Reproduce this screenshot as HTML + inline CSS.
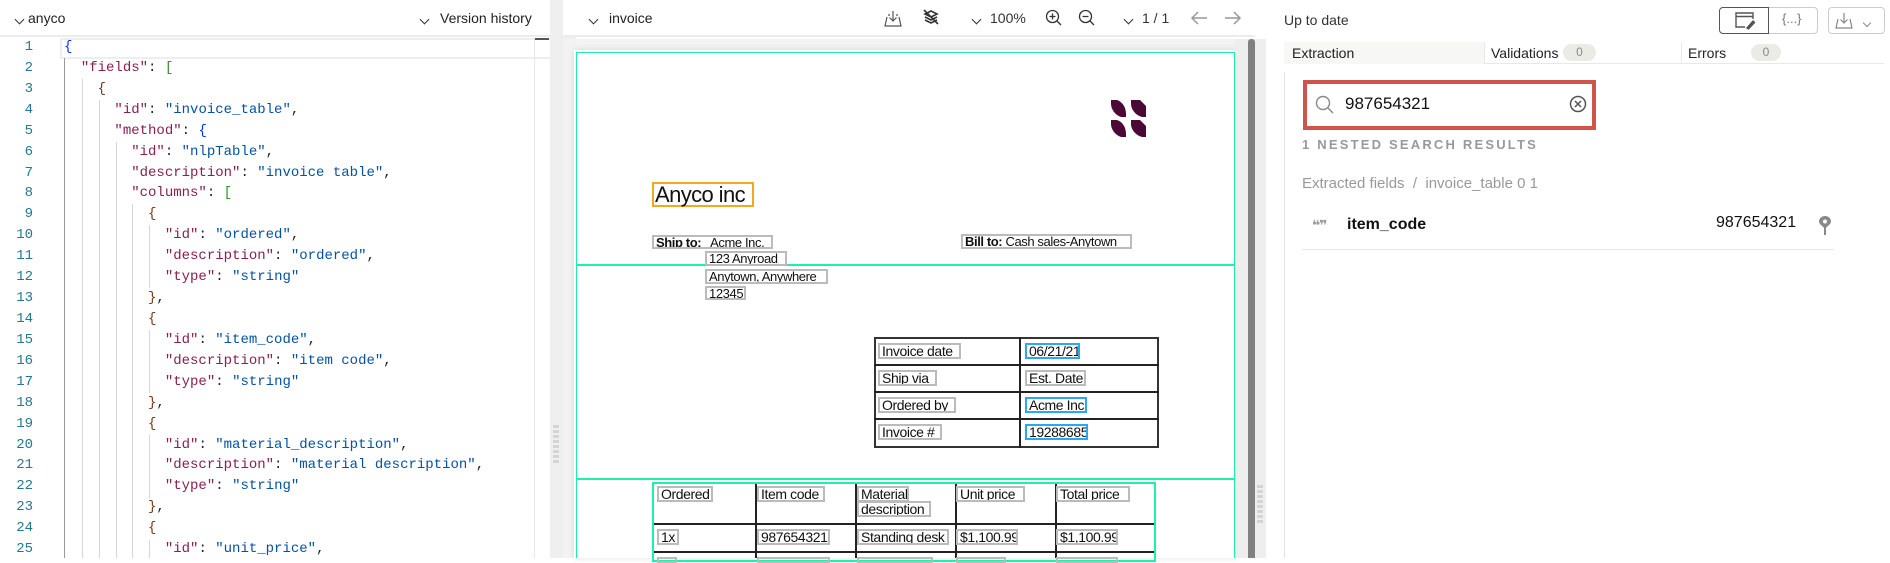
<!DOCTYPE html>
<html><head><meta charset="utf-8"><style>
*{box-sizing:border-box;margin:0;padding:0}
body{width:1890px;height:558px;overflow:hidden;background:#fff;font-family:"Liberation Sans",sans-serif;position:relative;color:#222}
.a{position:absolute}
.code{font-family:"Liberation Mono",monospace;font-size:14px;white-space:pre;line-height:20.92px}
.ln{position:absolute;left:0;width:33px;text-align:right;color:#237893;font-family:"Liberation Mono",monospace;font-size:14px;line-height:20.92px}
.k{color:#8a1f4e}.s{color:#0451a5}.b1{color:#0431fa}.b2{color:#319331}.b3{color:#7b3814}
.g{position:absolute;width:1px;background:#d6d6d6}
.doc{font-family:"Liberation Sans",sans-serif;font-size:13px;color:#111;letter-spacing:-0.4px}
.w{position:absolute;border:2px solid #bbb;line-height:11px;padding:0 2px;white-space:nowrap;overflow:hidden}
.wb{border-color:#2aa8f0}
.gl{position:absolute;background:#1ef0a8}
.hline{position:absolute;background:#222}
.chev{display:inline-block;width:7px;height:7px;border-right:1.6px solid #333;border-bottom:1.6px solid #333;transform:rotate(45deg)}
</style></head><body>

<!-- LEFT PANEL -->
<div class="a" style="left:0;top:0;width:550px;height:37px;border-bottom:2px solid #ececec"></div>
<div class="a" style="left:16px;top:10px"><span class="chev"></span></div>
<div class="a" style="left:28px;top:10px;font-size:14px;color:#222">anyco</div>
<div class="a" style="left:421px;top:10px"><span class="chev"></span></div>
<div class="a" style="left:440px;top:10px;font-size:14px;color:#222">Version history</div>
<div class="a" style="left:60px;top:38px;width:490px;height:21px;border:2px solid #eee;border-right:none"></div>
<div class="a" style="left:534px;top:38px;width:15px;height:2px;background:#555"></div>
<div class="a" style="left:534px;top:38px;width:1px;height:520px;background:#e6e6e6"></div>

<div class="ln" style="top:37px">1<br>2<br>3<br>4<br>5<br>6<br>7<br>8<br>9<br>10<br>11<br>12<br>13<br>14<br>15<br>16<br>17<br>18<br>19<br>20<br>21<br>22<br>23<br>24<br>25</div>
<div class="g" style="left:64px;top:58px;height:500px;background:#999"></div>
<div class="g" style="left:82px;top:79px;height:479px"></div>
<div class="g" style="left:99px;top:100px;height:458px"></div>
<div class="g" style="left:116px;top:142px;height:416px"></div>
<div class="g" style="left:132px;top:204px;height:354px"></div>
<div class="g" style="left:149px;top:225px;height:63px"></div>
<div class="g" style="left:149px;top:330px;height:63px"></div>
<div class="g" style="left:149px;top:435px;height:63px"></div>
<div class="g" style="left:149px;top:540px;height:18px"></div>
<div class="a code" style="left:64px;top:37px"><span class="b1">{</span>
  <span class="k">"fields"</span>: <span class="b2">[</span>
    <span class="b3">{</span>
      <span class="k">"id"</span>: <span class="s">"invoice_table"</span>,
      <span class="k">"method"</span>: <span class="b1">{</span>
        <span class="k">"id"</span>: <span class="s">"nlpTable"</span>,
        <span class="k">"description"</span>: <span class="s">"invoice table"</span>,
        <span class="k">"columns"</span>: <span class="b2">[</span>
          <span class="b3">{</span>
            <span class="k">"id"</span>: <span class="s">"ordered"</span>,
            <span class="k">"description"</span>: <span class="s">"ordered"</span>,
            <span class="k">"type"</span>: <span class="s">"string"</span>
          <span class="b3">}</span>,
          <span class="b3">{</span>
            <span class="k">"id"</span>: <span class="s">"item_code"</span>,
            <span class="k">"description"</span>: <span class="s">"item code"</span>,
            <span class="k">"type"</span>: <span class="s">"string"</span>
          <span class="b3">}</span>,
          <span class="b3">{</span>
            <span class="k">"id"</span>: <span class="s">"material_description"</span>,
            <span class="k">"description"</span>: <span class="s">"material description"</span>,
            <span class="k">"type"</span>: <span class="s">"string"</span>
          <span class="b3">}</span>,
          <span class="b3">{</span>
            <span class="k">"id"</span>: <span class="s">"unit_price"</span>,</div>

<!-- separator 1 -->
<div class="a" style="left:550px;top:0;width:26px;height:558px;background:#efefef"></div>
<div class="a" style="left:553px;top:425px;width:6px;height:38px;background:repeating-linear-gradient(#d4d4d4 0 3px,transparent 3px 5px)"></div>

<!-- MIDDLE PANEL -->
<div class="a" style="left:563px;top:0;width:692px;height:37px;background:#fff;border-bottom:2px solid #ececec"></div>
<div class="a" style="left:590px;top:10px"><span class="chev"></span></div>
<div class="a" style="left:609px;top:10px;font-size:14px;color:#222">invoice</div>
<svg class="a" style="left:884px;top:10px" width="18" height="17" viewBox="0 0 18 17" fill="none" stroke="#555" stroke-width="1.2"><path d="M3 7 L1 16 H17 L15 7 M9 1 V11 M5.5 7.5 L9 11 L12.5 7.5 M6 5 H4 M12 5 H14"/></svg>
<svg class="a" style="left:922px;top:8px" width="18" height="18" viewBox="0 0 18 18" fill="none" stroke="#333" stroke-width="1.6"><path d="M3 6 L9 3 L15 6 L9 9 Z M3 9 L9 12 L15 9 M3 12 L9 15 L15 12 M2 2 L16 16"/></svg>
<div class="a" style="left:973px;top:10px"><span class="chev"></span></div>
<div class="a" style="left:990px;top:10px;font-size:14px;color:#333">100%</div>
<svg class="a" style="left:1045px;top:9px" width="18" height="18" viewBox="0 0 18 18" fill="none" stroke="#333" stroke-width="1.3"><circle cx="7.5" cy="7.5" r="6"/><path d="M7.5 4.5 V10.5 M4.5 7.5 H10.5 M12 12 L16 16"/></svg>
<svg class="a" style="left:1078px;top:9px" width="18" height="18" viewBox="0 0 18 18" fill="none" stroke="#333" stroke-width="1.3"><circle cx="7.5" cy="7.5" r="6"/><path d="M4.5 7.5 H10.5 M12 12 L16 16"/></svg>
<div class="a" style="left:1125px;top:10px"><span class="chev"></span></div>
<div class="a" style="left:1142px;top:10px;font-size:14px;color:#333">1 / 1</div>
<svg class="a" style="left:1190px;top:10px" width="18" height="16" viewBox="0 0 18 16" fill="none" stroke="#999" stroke-width="1.5"><path d="M17 8 H2 M8 2 L2 8 L8 14"/></svg>
<svg class="a" style="left:1224px;top:10px" width="18" height="16" viewBox="0 0 18 16" fill="none" stroke="#999" stroke-width="1.5"><path d="M1 8 H16 M10 2 L16 8 L10 14"/></svg>

<div class="a" style="left:563px;top:39px;width:685px;height:519px;background:#f3f3f3"></div>
<div class="a" style="left:574px;top:50px;width:664px;height:508px;background:#fff;box-shadow:0 0 6px rgba(0,0,0,.12)"></div>
<div class="a" style="left:1235px;top:39px;width:31px;height:519px;background:#eeeeee"></div>
<div class="a" style="left:1248px;top:39px;width:7px;height:519px;background:#808080;border-radius:3px 3px 0 0"></div>
<div class="a" style="left:1257px;top:485px;width:6px;height:38px;background:repeating-linear-gradient(#d4d4d4 0 3px,transparent 3px 5px)"></div>

<div class="gl" style="left:576px;top:52px;width:659px;height:1px"></div>
<div class="gl" style="left:576px;top:52px;width:1px;height:506px"></div>
<div class="gl" style="left:1234px;top:52px;width:1px;height:506px"></div>
<div class="gl" style="left:576px;top:264px;width:659px;height:2px"></div>
<div class="gl" style="left:576px;top:478px;width:659px;height:2px"></div>

<svg class="a" style="left:1109px;top:100px" width="39" height="37" viewBox="0 0 39 37" fill="#4b0a36"><path d="M2 0 H8 C14 2 17 8 17 14 V17 H12 C6 15 2 9 2 4 Z"/><path d="M22 0 H31 L37 6 V17 H33 C26 15 22 9 22 4 Z"/><path d="M2 20 H8 C14 22 17 28 17 34 V37 H12 C6 35 2 29 2 24 Z"/><path d="M22 20 H31 L37 26 V37 H33 C26 35 22 29 22 24 Z"/></svg>

<div class="doc">
<div class="a" style="left:652px;top:182px;width:102px;height:25px;border:2px solid #f5a623;font-size:22px;line-height:22px;padding-left:1px;letter-spacing:-0.6px">Anyco inc</div>
<div class="w" style="left:652px;top:235px;width:121px;height:14px"><b>Ship to:</b>&nbsp;&nbsp; Acme Inc.</div>
<div class="w" style="left:705px;top:251px;width:82px;height:15px">123 Anyroad</div>
<div class="w" style="left:705px;top:269px;width:123px;height:15px">Anytown, Anywhere</div>
<div class="w" style="left:705px;top:286px;width:41px;height:14px">12345</div>
<div class="w" style="left:961px;top:234px;width:171px;height:15px"><b>Bill to:</b> Cash sales-Anytown</div>

<div class="a" style="left:874px;top:337px;width:285px;height:111px;border:2px solid #333"></div>
<div class="hline" style="left:1019px;top:337px;width:2px;height:111px"></div>
<div class="hline" style="left:874px;top:364px;width:285px;height:2px"></div>
<div class="hline" style="left:874px;top:391px;width:285px;height:2px"></div>
<div class="hline" style="left:874px;top:418px;width:285px;height:2px"></div>
<div class="w" style="left:878px;top:343px;width:83px;height:16px;font-size:14px;line-height:13px">Invoice date</div>
<div class="w wb" style="left:1025px;top:343px;width:55px;height:16px;font-size:14px;line-height:13px">06/21/21</div>
<div class="w" style="left:878px;top:370px;width:59px;height:16px;font-size:14px;line-height:13px">Ship via</div>
<div class="w" style="left:1025px;top:370px;width:61px;height:16px;font-size:14px;line-height:13px">Est. Date</div>
<div class="w" style="left:878px;top:397px;width:78px;height:16px;font-size:14px;line-height:13px">Ordered by</div>
<div class="w wb" style="left:1025px;top:397px;width:62px;height:16px;font-size:14px;line-height:13px">Acme Inc.</div>
<div class="w" style="left:878px;top:424px;width:64px;height:16px;font-size:14px;line-height:13px">Invoice #</div>
<div class="w wb" style="left:1025px;top:424px;width:63px;height:16px;font-size:14px;line-height:13px">19288685</div>

<div class="a" style="left:652px;top:482px;width:504px;height:80px;border:2px solid #1ef0a8"></div>
<div class="hline" style="left:755px;top:484px;width:2px;height:74px"></div>
<div class="hline" style="left:855px;top:484px;width:2px;height:74px"></div>
<div class="hline" style="left:955px;top:484px;width:2px;height:74px"></div>
<div class="hline" style="left:1055px;top:484px;width:2px;height:74px"></div>
<div class="hline" style="left:654px;top:523px;width:500px;height:2px"></div>
<div class="hline" style="left:654px;top:551px;width:500px;height:2px"></div>
<div class="w" style="left:657px;top:486px;width:56px;height:16px;font-size:14px;line-height:13px">Ordered</div>
<div class="w" style="left:757px;top:486px;width:68px;height:16px;font-size:14px;line-height:13px">Item code</div>
<div class="w" style="left:857px;top:486px;width:52px;height:16px;font-size:14px;line-height:13px">Material</div>
<div class="w" style="left:857px;top:501px;width:74px;height:16px;font-size:14px;line-height:13px">description</div>
<div class="w" style="left:956px;top:486px;width:69px;height:16px;font-size:14px;line-height:13px">Unit price</div>
<div class="w" style="left:1056px;top:486px;width:74px;height:16px;font-size:14px;line-height:13px">Total price</div>
<div class="w" style="left:657px;top:529px;width:22px;height:16px;font-size:14px;line-height:13px">1x</div>
<div class="w" style="left:757px;top:529px;width:73px;height:16px;font-size:14px;line-height:13px">987654321</div>
<div class="w" style="left:857px;top:529px;width:92px;height:16px;font-size:14px;line-height:13px">Standing desk</div>
<div class="w" style="left:956px;top:529px;width:62px;height:16px;font-size:14px;line-height:13px">$1,100.99</div>
<div class="w" style="left:1056px;top:529px;width:62px;height:16px;font-size:14px;line-height:13px">$1,100.99</div>
<div class="w" style="left:657px;top:557px;width:20px;height:6px"></div>
<div class="w" style="left:757px;top:557px;width:73px;height:6px"></div>
<div class="w" style="left:857px;top:557px;width:76px;height:6px"></div>
<div class="w" style="left:956px;top:557px;width:50px;height:6px"></div>
<div class="w" style="left:1056px;top:557px;width:62px;height:6px"></div>
</div>

<!-- RIGHT PANEL -->
<div class="a" style="left:1284px;top:12px;font-size:14px;color:#333">Up to date</div>
<div class="a" style="left:1719px;top:7px;width:50px;height:27px;border:1.5px solid #555;border-radius:4px 0 0 4px"></div>
<div class="a" style="left:1769px;top:7px;width:49px;height:27px;border:1.5px solid #ccc;border-left:none;border-radius:0 4px 4px 0"></div>
<svg class="a" style="left:1734px;top:11px" width="22" height="19" viewBox="0 0 22 19" fill="none" stroke="#555" stroke-width="1.4"><path d="M11 16 H2 V2 H19 V8 M2 5.5 H19"/><path d="M13 17 L19 10 L20.5 11.5 L14.5 18 Z" fill="#555"/></svg>
<div class="a" style="left:1782px;top:11px;font-size:13px;color:#777">{...}</div>
<div class="a" style="left:1828px;top:7px;width:57px;height:27px;border:1.5px solid #ccc;border-radius:4px"></div>
<svg class="a" style="left:1835px;top:12px" width="18" height="17" viewBox="0 0 18 17" fill="none" stroke="#888" stroke-width="1.2"><path d="M3 7 L1 16 H17 L15 7 M9 1 V11 M5.5 7.5 L9 11 L12.5 7.5"/></svg>
<div class="a" style="left:1864px;top:13px"><span class="chev" style="border-color:#888;width:6px;height:6px"></span></div>

<div class="a" style="left:1284px;top:42px;width:600px;height:22px;border-bottom:1px solid #e8e8e8"></div>
<div class="a" style="left:1284px;top:42px;width:200px;height:22px;background:#f7f7f5"></div>
<div class="a" style="left:1484px;top:42px;width:1px;height:22px;background:#e8e8e8"></div>
<div class="a" style="left:1681px;top:42px;width:1px;height:22px;background:#e8e8e8"></div>
<div class="a" style="left:1292px;top:45px;font-size:14px;color:#222">Extraction</div>
<div class="a" style="left:1491px;top:45px;font-size:14px;color:#222">Validations</div>
<div class="a" style="left:1563px;top:44px;width:33px;height:17px;border-radius:9px;background:#ebebe6;font-size:12px;color:#888;text-align:center;line-height:17px">0</div>
<div class="a" style="left:1688px;top:45px;font-size:14px;color:#222">Errors</div>
<div class="a" style="left:1751px;top:44px;width:30px;height:17px;border-radius:9px;background:#ebebe6;font-size:12px;color:#888;text-align:center;line-height:17px">0</div>
<div class="a" style="left:1284px;top:72px;width:1px;height:486px;background:#e2e2e2"></div>

<div class="a" style="left:1303px;top:80px;width:293px;height:50px;border:4px solid #d0534c"></div>
<svg class="a" style="left:1315px;top:95px" width="20" height="20" viewBox="0 0 20 20" fill="none" stroke="#888" stroke-width="1.4"><circle cx="8" cy="8" r="6.5"/><path d="M13 13 L18 18"/></svg>
<div class="a" style="left:1345px;top:94px;font-size:17px;color:#111">987654321</div>
<svg class="a" style="left:1569px;top:95px" width="18" height="18" viewBox="0 0 18 18" fill="none" stroke="#555" stroke-width="1.5"><circle cx="9" cy="9" r="7.5"/><path d="M6 6 L12 12 M12 6 L6 12"/></svg>
<div class="a" style="left:1302px;top:137px;font-size:13px;font-weight:bold;letter-spacing:2.2px;color:#999">1 NESTED SEARCH RESULTS</div>
<div class="a" style="left:1302px;top:175px;font-size:15px;color:#999">Extracted fields&nbsp; /&nbsp; invoice_table 0 1</div>
<div class="a" style="left:1312px;top:218px;font-size:14px;color:#999;font-weight:bold;letter-spacing:-1px;font-family:'DejaVu Sans',sans-serif">❝❞</div>
<div class="a" style="left:1347px;top:216px;font-size:16px;color:#111;font-weight:600">item_code</div>
<div class="a" style="left:1716px;top:214px;font-size:16px;color:#111">987654321</div>
<svg class="a" style="left:1819px;top:216px" width="12" height="19" viewBox="0 0 12 19" fill="#888"><path d="M6 0 C9.5 0 12 2.5 12 5.5 C12 8.5 8 10 7 12 V19 H5 V12 C4 10 0 8.5 0 5.5 C0 2.5 2.5 0 6 0 Z"/><circle cx="6" cy="5.5" r="2" fill="#fff"/></svg>
<div class="a" style="left:1302px;top:249px;width:532px;height:1px;background:#e6e6e6"></div>
</body></html>
